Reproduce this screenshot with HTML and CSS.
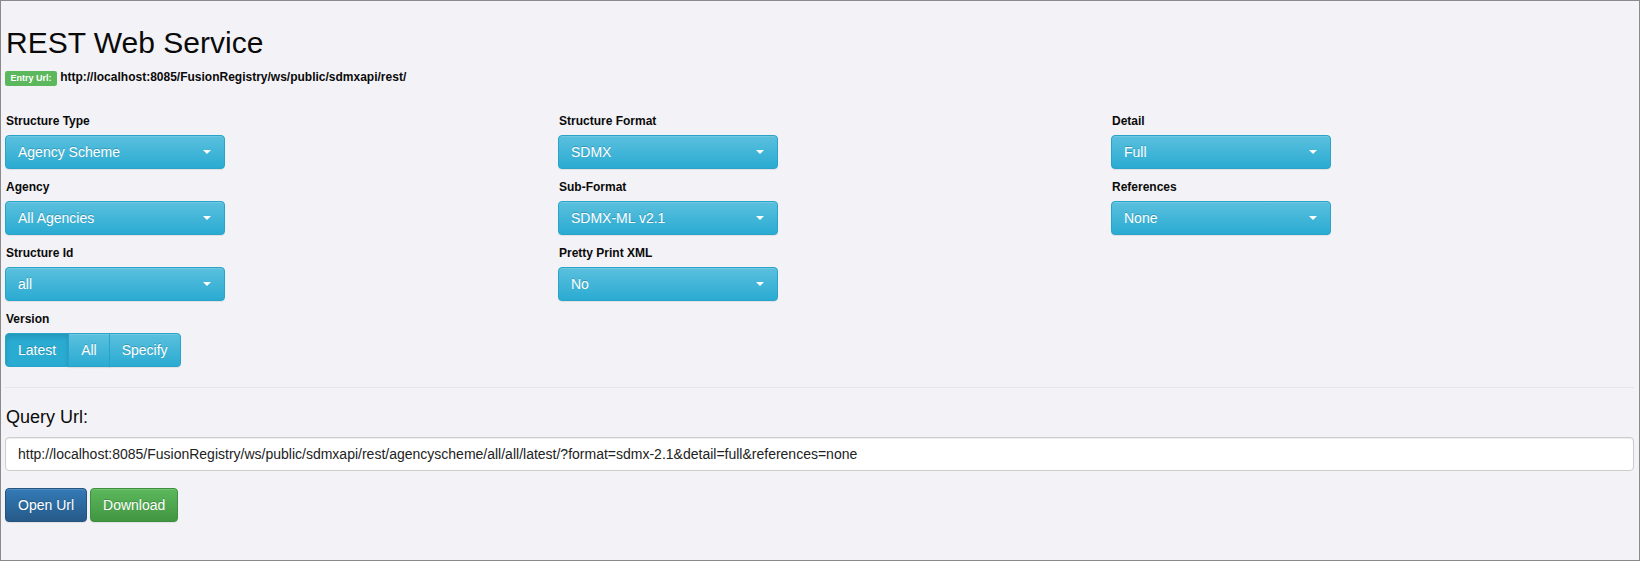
FILE: index.html
```html
<!DOCTYPE html>
<html lang="en">
<head>
<meta charset="utf-8">
<title>REST Web Service</title>
<link rel="stylesheet" href="styles.css">
</head>
<body>
<div class="frame">
  <div class="page">
    <h1 class="title">REST Web Service</h1>
    <div class="entry">
      <span class="badge">Entry Url:</span>
      <span class="entry-url">http://localhost:8085/FusionRegistry/ws/public/sdmxapi/rest/</span>
    </div>

    <div class="form-grid">
      <div class="form-col">
        <div class="field">
          <label class="field-label">Structure Type</label>
          <button class="dropdown" type="button"><span>Agency Scheme</span><span class="caret"></span></button>
        </div>
        <div class="field">
          <label class="field-label">Agency</label>
          <button class="dropdown" type="button"><span>All Agencies</span><span class="caret"></span></button>
        </div>
        <div class="field">
          <label class="field-label">Structure Id</label>
          <button class="dropdown" type="button"><span>all</span><span class="caret"></span></button>
        </div>
        <div class="field">
          <label class="field-label">Version</label>
          <div class="btn-group">
            <button class="seg is-active" type="button">Latest</button>
            <button class="seg" type="button">All</button>
            <button class="seg" type="button">Specify</button>
          </div>
        </div>
      </div>

      <div class="form-col">
        <div class="field">
          <label class="field-label">Structure Format</label>
          <button class="dropdown" type="button"><span>SDMX</span><span class="caret"></span></button>
        </div>
        <div class="field">
          <label class="field-label">Sub-Format</label>
          <button class="dropdown" type="button"><span>SDMX-ML v2.1</span><span class="caret"></span></button>
        </div>
        <div class="field">
          <label class="field-label">Pretty Print XML</label>
          <button class="dropdown" type="button"><span>No</span><span class="caret"></span></button>
        </div>
      </div>

      <div class="form-col">
        <div class="field">
          <label class="field-label">Detail</label>
          <button class="dropdown" type="button"><span>Full</span><span class="caret"></span></button>
        </div>
        <div class="field">
          <label class="field-label">References</label>
          <button class="dropdown" type="button"><span>None</span><span class="caret"></span></button>
        </div>
      </div>
    </div>

    <hr class="divider">

    <h3 class="query-title">Query Url:</h3>
    <input class="query-input" type="text" readonly value="http://localhost:8085/FusionRegistry/ws/public/sdmxapi/rest/agencyscheme/all/all/latest/?format=sdmx-2.1&amp;detail=full&amp;references=none">

    <div class="actions">
      <button class="btn btn-primary" type="button">Open Url</button>
      <button class="btn btn-success" type="button">Download</button>
    </div>
  </div>
</div>
</body>
</html>
```

FILE: styles.css
```css
* {
  box-sizing: border-box;
}

html, body {
  margin: 0;
  padding: 0;
}

body {
  font-family: "Liberation Sans", Arial, Helvetica, sans-serif;
  color: #111;
  background: #f3f2f7;
}

.frame {
  height: 561px;
  border: 1px solid #8a8a8a;
  background: #f3f2f7;
  overflow: hidden;
}

.page {
  padding: 0 5px 0 4px;
}

.title {
  margin: 25px 0 0 1px;
  font-size: 30px;
  line-height: 33px;
  font-weight: normal;
  color: #0a0a0a;
}

.entry {
  margin-top: 8px;
  font-size: 12px;
  line-height: 20px;
  font-weight: bold;
  color: #0a0a0a;
}

.badge {
  display: inline;
  padding: 0.2em 0.6em 0.3em;
  font-size: 9px;
  font-weight: bold;
  line-height: 1;
  color: #fff;
  background: #5cb85c;
  border-radius: 0.25em;
  white-space: nowrap;
}

.form-grid {
  margin-top: 26px;
  display: grid;
  grid-template-columns: repeat(3, 1fr);
  column-gap: 30px;
}

.form-col {
  display: flex;
  flex-direction: column;
  gap: 10px;
}

.field {
  display: flex;
  flex-direction: column;
  align-items: flex-start;
}

.field-label {
  display: block;
  margin: 0 0 5px 1px;
  font-size: 12px;
  line-height: 17px;
  font-weight: bold;
  color: #0a0a0a;
}

/* blue select-style buttons */
.dropdown,
.seg {
  font-family: inherit;
  font-size: 14px;
  line-height: 20px;
  color: #fff;
  text-shadow: 0 -1px 0 rgba(0, 0, 0, 0.2);
  background-color: #5bc0de;
  background-image: linear-gradient(to bottom, #5bc0de 0, #2aabd2 100%);
  border: 1px solid #28a4c9;
  box-shadow: inset 0 1px 0 rgba(255, 255, 255, 0.15), 0 1px 1px rgba(0, 0, 0, 0.075);
  cursor: pointer;
}

.dropdown {
  width: 220px;
  height: 34px;
  padding: 6px 12px;
  border-radius: 4px;
  display: flex;
  align-items: center;
  justify-content: space-between;
  text-align: left;
}

.caret {
  width: 0;
  height: 0;
  border-top: 4px solid #fff;
  border-left: 4px solid transparent;
  border-right: 4px solid transparent;
  margin-right: 1px;
}

.btn-group {
  display: flex;
}

.seg {
  height: 34px;
  padding: 6px 12px;
  border-radius: 0;
}

.seg + .seg {
  margin-left: -1px;
}

.seg:first-child {
  border-radius: 4px 0 0 4px;
}

.seg:last-child {
  border-radius: 0 4px 4px 0;
}

.seg.is-active {
  background-image: none;
  background-color: #2aabd2;
  border-color: #28a4c9;
  box-shadow: inset 0 3px 5px rgba(0, 0, 0, 0.125);
}

.divider {
  margin: 20px 0 0;
  border: 0;
  border-top: 1px solid #e6e6ea;
  height: 0;
}

.query-title {
  margin: 19px 0 0 1px;
  font-size: 18px;
  line-height: 20px;
  font-weight: normal;
  color: #0a0a0a;
}

.query-input {
  display: block;
  width: 100%;
  height: 34px;
  margin-top: 10px;
  padding: 6px 12px;
  font-family: inherit;
  font-size: 14px;
  line-height: 20px;
  color: #222;
  background: #fff;
  border: 1px solid #ccc;
  border-radius: 4px;
  box-shadow: inset 0 1px 1px rgba(0, 0, 0, 0.075);
  outline: none;
}

.actions {
  margin-top: 17px;
  display: flex;
  gap: 3px;
}

.btn {
  height: 34px;
  padding: 6px 12px;
  font-family: inherit;
  font-size: 14px;
  line-height: 20px;
  color: #fff;
  text-shadow: 0 -1px 0 rgba(0, 0, 0, 0.2);
  border: 1px solid transparent;
  border-radius: 4px;
  box-shadow: inset 0 1px 0 rgba(255, 255, 255, 0.15), 0 1px 1px rgba(0, 0, 0, 0.075);
  cursor: pointer;
}

.btn-primary {
  background-color: #337ab7;
  background-image: linear-gradient(to bottom, #337ab7 0, #265a88 100%);
  border-color: #245580;
}

.btn-success {
  background-color: #5cb85c;
  background-image: linear-gradient(to bottom, #5cb85c 0, #419641 100%);
  border-color: #3e8f3e;
}
```
